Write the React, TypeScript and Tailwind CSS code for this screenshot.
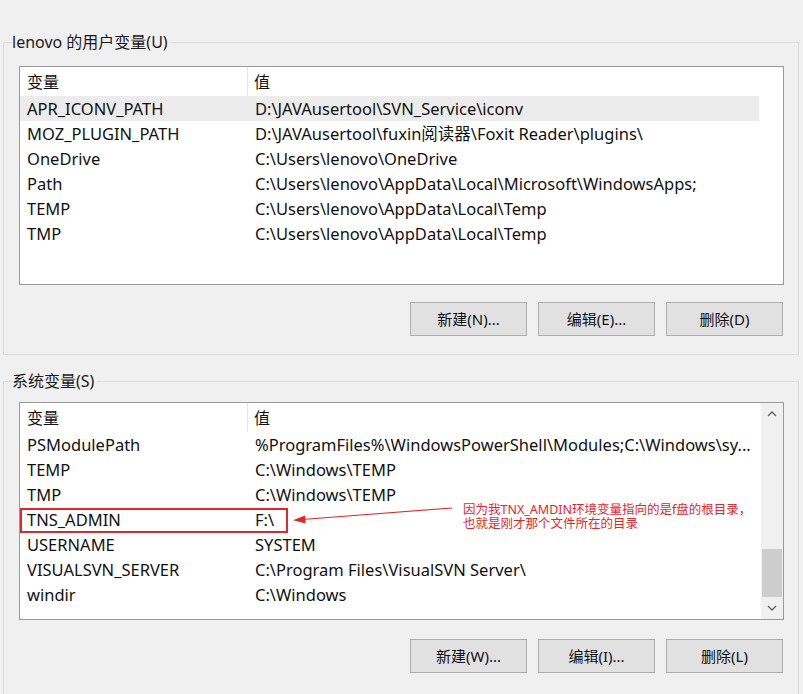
import React from "react";

const font = { fontFamily: '"Noto Sans", "Noto Sans CJK SC", sans-serif' };

const userRows: [string, string][] = [
  ["APR_ICONV_PATH", "D:\\JAVAusertool\\SVN_Service\\iconv"],
  ["MOZ_PLUGIN_PATH", "D:\\JAVAusertool\\fuxin阅读器\\Foxit Reader\\plugins\\"],
  ["OneDrive", "C:\\Users\\lenovo\\OneDrive"],
  ["Path", "C:\\Users\\lenovo\\AppData\\Local\\Microsoft\\WindowsApps;"],
  ["TEMP", "C:\\Users\\lenovo\\AppData\\Local\\Temp"],
  ["TMP", "C:\\Users\\lenovo\\AppData\\Local\\Temp"],
];

const sysRows: [string, string][] = [
  ["PSModulePath", "%ProgramFiles%\\WindowsPowerShell\\Modules;C:\\Windows\\sy..."],
  ["TEMP", "C:\\Windows\\TEMP"],
  ["TMP", "C:\\Windows\\TEMP"],
  ["TNS_ADMIN", "F:\\"],
  ["USERNAME", "SYSTEM"],
  ["VISUALSVN_SERVER", "C:\\Program Files\\VisualSVN Server\\"],
  ["windir", "C:\\Windows"],
];

function Header() {
  return (
    <div className="flex h-[29px] w-[740px] items-center text-[16px]">
      <div className="flex h-full w-[228px] items-center border-r border-[#e5e5e5] pl-[7px]">变量</div>
      <div className="flex h-full items-center pl-[6px]">值</div>
    </div>
  );
}

function Row({ name, value, selected }: { name: string; value: string; selected?: boolean }) {
  return (
    <div
      className={`flex h-[25px] w-[739px] items-center overflow-hidden whitespace-nowrap text-[16.5px] leading-[25px] ${
        selected ? "bg-[#ececec]" : ""
      }`}
    >
      <div className="w-[228px] shrink-0 pl-[7px]">{name}</div>
      <div className="pl-[7px]">{value}</div>
    </div>
  );
}

function Buttons({ labels }: { labels: string[] }) {
  return (
    <div className="flex justify-end gap-[11px] pr-[1px]">
      {labels.map((l) => (
        <div
          key={l}
          className="flex h-[34px] w-[117px] items-center justify-center border border-[#adadad] bg-[#e1e1e1] text-[15px] text-[#111]"
        >
          {l}
        </div>
      ))}
    </div>
  );
}

function Chevron({ up }: { up?: boolean }) {
  return (
    <svg width="10" height="6" viewBox="0 0 10 6">
      <path
        d={up ? "M1 5 L5 1 L9 5" : "M1 1 L5 5 L9 1"}
        fill="none"
        stroke="#606060"
        strokeWidth="1.3"
      />
    </svg>
  );
}

export default function App() {
  return (
    <div className="h-[694px] w-[803px] overflow-hidden bg-[#f0f0f0] text-[15px] text-[#111]" style={font}>
      <div className="h-[32px]" />
      <fieldset className="ml-[3px] w-[796px] border border-[#dcdcdc] pb-[18px] pl-[15px] pr-[14px]">
        <legend className="-ml-[7px] pr-[3px] text-[16px] leading-[20px] text-[#1a1a1a]">lenovo 的用户变量(U)</legend>
        <div className="mt-[14px] h-[219px] w-[765px] border border-[#9a9a9a] bg-white">
          <Header />
          {userRows.map(([n, v], i) => (
            <Row key={n} name={n} value={v} selected={i === 0} />
          ))}
        </div>
        <div className="mt-[17px]">
          <Buttons labels={["新建(N)...", "编辑(E)...", "删除(D)"]} />
        </div>
      </fieldset>

      <fieldset className="mt-[16px] ml-[3px] h-[400px] w-[796px] border border-[#dcdcdc] pl-[15px] pr-[14px]">
        <legend className="-ml-[7px] pr-[3px] text-[16px] leading-[20px] text-[#1a1a1a]">系统变量(S)</legend>
        <div className="relative mt-[11px] flex h-[218px] w-[765px] border border-[#9a9a9a] bg-white">
          <div className="flex-1 overflow-hidden">
            <Header />
            {sysRows.map(([n, v]) => (
              <Row key={n} name={n} value={v} />
            ))}
          </div>
          <div className="flex w-[22px] flex-col bg-[#f0f0f0]">
            <div className="flex h-[22px] items-center justify-center">
              <Chevron up />
            </div>
            <div className="flex-1">
              <div className="mx-[1px] mt-[124px] h-[48px] bg-[#cdcdcd]" />
            </div>
            <div className="flex h-[22px] items-center justify-center">
              <Chevron />
            </div>
          </div>

          <div className="absolute left-0 top-[105px] h-[25px] w-[268px] border-2 border-[#e3262b]" />
          <svg className="pointer-events-none absolute left-0 top-0" width="760" height="216">
            <line x1="432" y1="105" x2="282" y2="116.5" stroke="#e3262b" strokeWidth="1.2" />
            <path d="M273 117.3 L285 112.6 L285.6 120.6 Z" fill="#e3262b" />
          </svg>
          <div className="absolute left-[443px] top-[100px] whitespace-nowrap text-[12.5px] leading-[14px] text-[#e3262b]">
            因为我TNX_AMDIN环境变量指向的是f盘的根目录，
            <br />
            也就是刚才那个文件所在的目录
          </div>
        </div>
        <div className="mt-[19px]">
          <Buttons labels={["新建(W)...", "编辑(I)...", "删除(L)"]} />
        </div>
      </fieldset>
    </div>
  );
}
